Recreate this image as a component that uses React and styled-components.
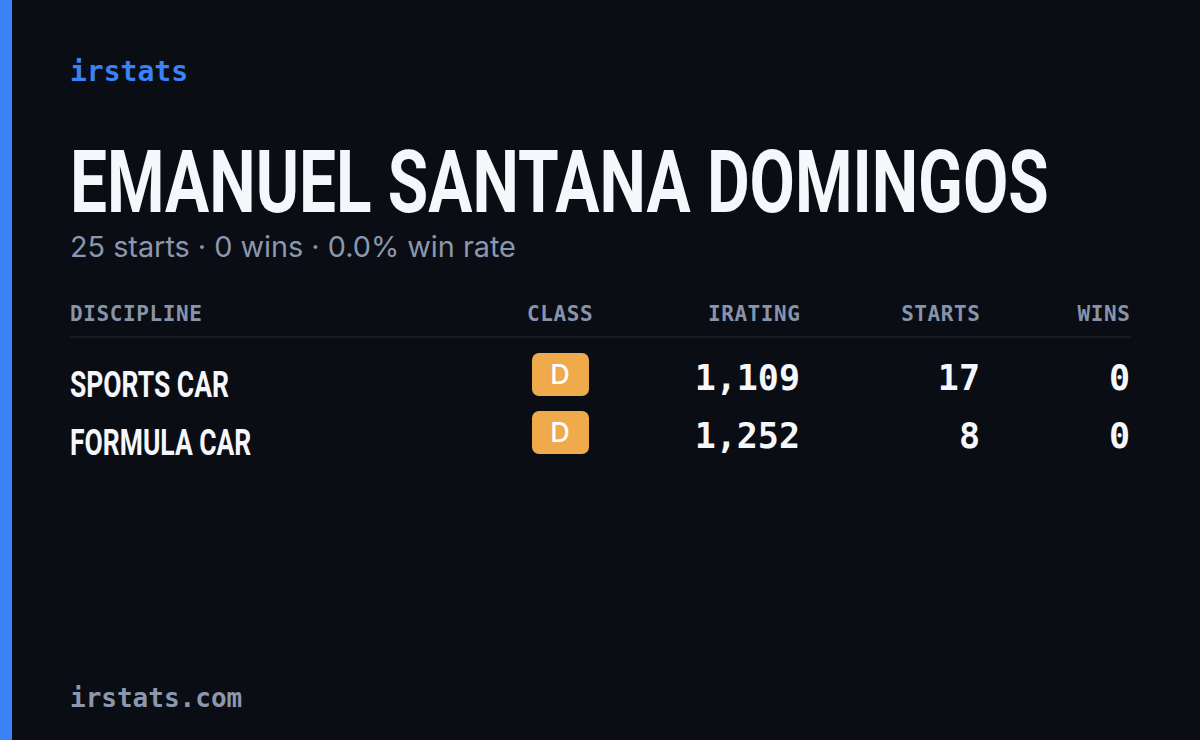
import React from "react";
import styled, { createGlobalStyle } from "styled-components";

const GlobalStyle = createGlobalStyle`
  html, body {
    margin: 0;
    padding: 0;
    background: #0a0d14;
  }
`;

const mono = `"DejaVu Sans Mono", "Liberation Mono", monospace`;

const Page = styled.div`
  width: 1200px;
  height: 740px;
  box-sizing: border-box;
  border-left: 12px solid #3b82f6;
  background: #0a0d14;
  padding: 52px 70px 24px 58px;
  display: flex;
  flex-direction: column;
  overflow: hidden;
`;

const Logo = styled.div`
  font-family: ${mono};
  font-weight: 700;
  font-size: 28px;
  line-height: 40px;
  color: #3b82f6;
`;

const Name = styled.h1`
  margin: 50px 0 0;
  font-family: Roboto, "Liberation Sans", sans-serif;
  font-weight: 700;
  font-size: 88px;
  line-height: 80px;
  color: #f6f7fb;
  white-space: nowrap;
  transform: scaleX(0.747);
  transform-origin: left center;
`;

const Summary = styled.div`
  margin-top: 7px;
  font-family: Inter, "Noto Sans", sans-serif;
  font-size: 28.8px;
  line-height: 36px;
  color: #8b97ad;
`;

const Table = styled.div`
  margin-top: 34px;
  display: grid;
  grid-template-columns: 1fr 66px 207px 180px 150px;
`;

const HeadCell = styled.div`
  font-family: ${mono};
  font-weight: 700;
  font-size: 21px;
  letter-spacing: 0.6px;
  line-height: 30px;
  color: #8794aa;
  text-align: ${(p) => p.align || "right"};
  padding-bottom: 7px;
  border-bottom: 2px solid #161b26;
  margin-right: ${(p) => (p.align === "right" ? "-0.6px" : "0")};
`;

const NameCell = styled.div`
  font-family: Roboto, "Liberation Sans", sans-serif;
  font-weight: 700;
  font-size: 36px;
  color: #f6f7fb;
  white-space: nowrap;
  transform: scaleX(0.735);
  transform-origin: left center;
  display: flex;
  align-items: flex-end;
  height: 58px;
  box-sizing: border-box;
  padding-bottom: 6px;
  line-height: 40px;
  margin-top: ${(p) => (p.first ? "15px" : "0")};
`;

const ClassCell = styled.div`
  display: flex;
  justify-content: center;
  align-items: flex-start;
  height: 58px;
  margin-top: ${(p) => (p.first ? "15px" : "0")};
`;

const Badge = styled.div`
  width: 57px;
  height: 43px;
  border-radius: 7px;
  background: #efaa4b;
  color: #ffffff;
  font-family: Inter, "Noto Sans", sans-serif;
  font-weight: 500;
  font-size: 27px;
  display: flex;
  align-items: center;
  justify-content: center;
`;

const NumCell = styled.div`
  font-family: ${mono};
  font-weight: 700;
  font-size: 35px;
  line-height: 50px;
  color: #f6f7fb;
  text-align: right;
  height: 58px;
  margin-top: ${(p) => (p.first ? "15px" : "0")};
`;

const Footer = styled.div`
  margin-top: auto;
  font-family: ${mono};
  font-weight: 700;
  font-size: 26px;
  line-height: 36px;
  color: #8b97ad;
`;

const rows = [
  { discipline: "SPORTS CAR", cls: "D", irating: "1,109", starts: 17, wins: 0 },
  { discipline: "FORMULA CAR", cls: "D", irating: "1,252", starts: 8, wins: 0 },
];

export default function App() {
  return (
    <>
      <GlobalStyle />
      <Page>
        <Logo>irstats</Logo>
        <Name>EMANUEL SANTANA DOMINGOS</Name>
        <Summary>25 starts · 0 wins · 0.0% win rate</Summary>
        <Table>
          <HeadCell align="left">DISCIPLINE</HeadCell>
          <HeadCell align="center">CLASS</HeadCell>
          <HeadCell align="right">IRATING</HeadCell>
          <HeadCell align="right">STARTS</HeadCell>
          <HeadCell align="right">WINS</HeadCell>
          {rows.map((row, index) => (
            <React.Fragment key={row.discipline}>
              <NameCell first={index === 0}>{row.discipline}</NameCell>
              <ClassCell first={index === 0}>
                <Badge>{row.cls}</Badge>
              </ClassCell>
              <NumCell first={index === 0}>{row.irating}</NumCell>
              <NumCell first={index === 0}>{row.starts}</NumCell>
              <NumCell first={index === 0}>{row.wins}</NumCell>
            </React.Fragment>
          ))}
        </Table>
        <Footer>irstats.com</Footer>
      </Page>
    </>
  );
}
